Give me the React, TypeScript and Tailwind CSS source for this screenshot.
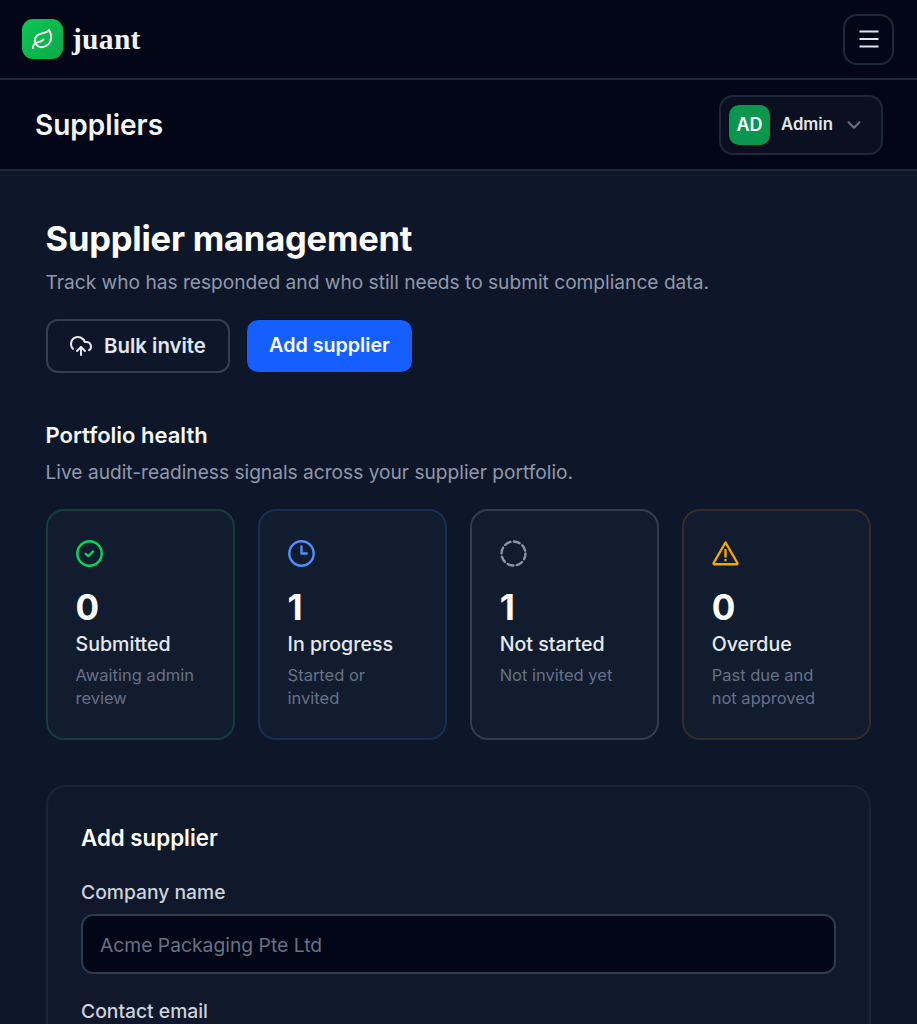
import { ChevronDown, CloudUpload, Leaf } from "lucide-react";
import type { ReactNode } from "react";

const stats: {
  value: string;
  label: string;
  hint: ReactNode;
  border: string;
  icon: ReactNode;
}[] = [
  {
    value: "0",
    label: "Submitted",
    hint: "Awaiting admin review",
    border: "border-[#153d3a]",
    icon: (
      <svg viewBox="0 0 27 27" className="h-[27px] w-[27px]" fill="none" stroke="#05d65f">
        <circle cx="13.5" cy="13.5" r="12.2" strokeWidth="2.4" />
        <path d="M9.7 13.8l2.6 2.4 4.8-4.8" strokeWidth="2.4" strokeLinecap="round" strokeLinejoin="round" />
      </svg>
    ),
  },
  {
    value: "1",
    label: "In progress",
    hint: "Started or invited",
    border: "border-[#192e52]",
    icon: (
      <svg viewBox="0 0 27 27" className="h-[27px] w-[27px]" fill="none" stroke="#528ffa">
        <circle cx="13.5" cy="13.5" r="12.2" strokeWidth="2.4" />
        <path d="M13.5 6.5v7h5.2" strokeWidth="2.4" strokeLinecap="round" strokeLinejoin="round" />
      </svg>
    ),
  },
  {
    value: "1",
    label: "Not started",
    hint: "Not invited yet",
    border: "border-[#303d52]",
    icon: (
      <svg viewBox="0 0 27 27" className="h-[27px] w-[27px]" fill="none" stroke="#8a96a8">
        <circle cx="13.5" cy="13.5" r="12" strokeWidth="2.4" strokeDasharray="6 3.42" strokeLinecap="round" />
      </svg>
    ),
  },
  {
    value: "0",
    label: "Overdue",
    hint: "Past due and not approved",
    border: "border-[#362e26]",
    icon: (
      <svg viewBox="0 0 27 27" className="h-[27px] w-[27px]" fill="none" stroke="#f5a800">
        <path
          d="M13.5 2.5L25.4 23a.9.9 0 0 1-.8 1.3H2.4a.9.9 0 0 1-.8-1.3L13.5 2.5z"
          strokeWidth="2.4"
          strokeLinejoin="round"
        />
        <path d="M13.5 10v6.5M13.5 20v.2" strokeWidth="2.4" strokeLinecap="round" />
      </svg>
    ),
  },
];

function StatCard({ value, label, hint, border, icon }: (typeof stats)[number]) {
  return (
    <div className={`rounded-[18px] border-2 ${border} bg-[#121c2f] px-[28px] pt-[29px] pb-[28px]`}>
      <div className="h-[27px]">{icon}</div>
      <div className="mt-[20px] text-[35px] leading-[40px] font-bold text-white">{value}</div>
      <div className="mt-[2px] text-[19.6px] leading-[30px] font-medium text-[#e5e9f0]">{label}</div>
      <div className="mt-[5px] text-[16.5px] leading-[23px] text-[#667186]">{hint}</div>
    </div>
  );
}

export default function App() {
  return (
    <div className="h-screen overflow-hidden bg-[#0e172a] font-['Inter',sans-serif]">
      <header className="flex h-[80px] items-center justify-between border-b-2 border-[#1f2838] bg-[#030617] pr-[23px] pl-[22px]">
        <div className="flex items-center gap-[9px]">
          <div className="flex h-[40px] w-[41px] items-center justify-center rounded-[11px] bg-gradient-to-br from-[#0fc552] to-[#08ab4a]">
            <Leaf size={23} className="text-white" strokeWidth={2} />
          </div>
          <span className="mt-[2px] font-['Liberation_Serif',serif] text-[29.5px] leading-none font-bold tracking-[0.3px] text-[#f1f3f6]">
            juant
          </span>
        </div>
        <button className="flex h-[51px] w-[51px] items-center justify-center rounded-[14px] border-2 border-[#1f2838]">
          <svg viewBox="0 0 20 20" className="h-[20px] w-[20px]" stroke="#dfe4ec" strokeWidth="2">
            <path d="M0.5 2.5h19M0.5 10h19M0.5 17.5h19" />
          </svg>
        </button>
      </header>

      <div className="flex h-[91px] items-center justify-between border-b-2 border-[#1f2838] bg-[#030617] pr-[34px] pl-[35px]">
        <h1 className="text-[28px] leading-none font-semibold text-[#f4f6f9]">Suppliers</h1>
        <div className="flex h-[60px] w-[164px] items-center rounded-[14px] border-2 border-[#1f2838] bg-[#0a1020] pl-[8px]">
          <div className="flex h-[40px] w-[41px] items-center justify-center rounded-[10px] bg-[#0a964d] text-[18px] font-semibold text-white">
            AD
          </div>
          <span className="ml-[11px] text-[16.7px] font-semibold text-[#e3e7ee]">Admin</span>
          <ChevronDown size={22} className="ml-[10px] text-[#6c7688]" />
        </div>
      </div>

      <main className="pt-[46px] pr-[45.75px] pl-[45.5px]">
        <h2 className="text-[34.5px] leading-[44px] font-bold tracking-[-0.2px] text-white">Supplier management</h2>
        <p className="mt-[6px] text-[19.15px] leading-[30px] text-[#8f99aa]">
          Track who has responded and who still needs to submit compliance data.
        </p>

        <div className="mt-[22px] flex gap-[16.5px]">
          <button className="flex h-[54px] w-[184px] items-center justify-center gap-[11px] rounded-[12px] border-2 border-[#333e50] text-[20.4px] font-semibold text-[#e3e7ee]">
            <CloudUpload size={24} strokeWidth={2} />
            Bulk invite
          </button>
          <button className="h-[54px] w-[167px] rounded-[12px] border border-[#0a0f1d] bg-[#155eff] text-[19.7px] font-semibold text-white">
            Add supplier
          </button>
        </div>

        <h3 className="mt-[47px] text-[22px] leading-[30px] font-semibold text-[#f4f6f9]">Portfolio health</h3>
        <p className="mt-[7px] text-[19.15px] leading-[30px] text-[#8f99aa]">
          Live audit-readiness signals across your supplier portfolio.
        </p>

        <div className="mt-[22px] grid grid-cols-4 gap-[22.5px]">
          {stats.map((s) => (
            <StatCard key={s.label} {...s} />
          ))}
        </div>

        <section className="mt-[45px] rounded-[20px] border-2 border-[#1a2436] bg-[#10192b] px-[33.5px] pt-[36px] pb-[40px]">
          <h3 className="text-[22.3px] leading-[30px] font-semibold text-white">Add supplier</h3>
          <label className="mt-[24.5px] block text-[19.3px] leading-[28px] font-medium text-[#cdd3dd]">Company name</label>
          <input
            placeholder="Acme Packaging Pte Ltd"
            className="mt-[8px] block h-[60px] w-full rounded-[12px] border-2 border-[#2d3a4f] bg-[#030617] px-[17px] pt-[2px] text-[19.3px] text-[#e3e7ee] outline-none placeholder:text-[#677184]"
          />
          <label className="mt-[23px] block text-[19.3px] leading-[28px] font-medium text-[#cdd3dd]">Contact email</label>
        </section>
      </main>
    </div>
  );
}
